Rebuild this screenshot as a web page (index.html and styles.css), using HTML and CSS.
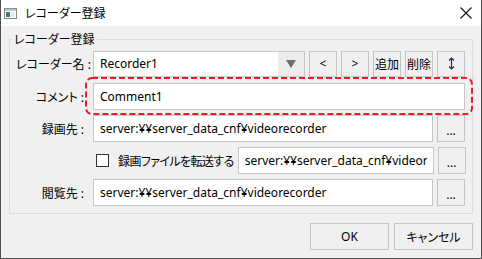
FILE: index.html
```html
<!DOCTYPE html>
<html lang="ja">
<head>
  <meta charset="UTF-8" />
  <title>レコーダー登録</title>
  <link rel="stylesheet" href="styles.css">
</head>
<body>
  <div class="window">
    <div class="titlebar">
      <svg class="app-icon" width="13" height="11" viewBox="0 0 13 11">
        <rect x="0.5" y="0.5" width="12" height="10" fill="#fff" stroke="#8a8a8a"/>
        <rect x="1" y="1" width="11" height="2" fill="#b9c6d3"/>
        <rect x="2" y="4" width="4" height="5" fill="#3f7f6f"/>
        <rect x="7" y="4" width="4" height="5" fill="#e4e9ee"/>
      </svg>
      <span class="title">レコーダー登録</span>
      <div class="close">
        <svg width="12" height="12" viewBox="0 0 12 12">
          <path d="M0.5 0.5 L11.5 11.5 M11.5 0.5 L0.5 11.5" stroke="#111" stroke-width="1.1"/>
        </svg>
      </div>
    </div>

    <div class="content">
      <fieldset class="group">
        <legend>レコーダー登録</legend>

        <div class="row">
          <label class="lbl">レコーダー名 :</label>
          <div class="combo">
            <span class="combo-text">Recorder1</span>
            <span class="combo-drop"><span class="arrow"></span></span>
          </div>
          <button class="sq">&lt;</button>
          <button class="sq">&gt;</button>
          <button class="sq">追加</button>
          <button class="sq">削除</button>
          <button class="sq">
            <svg width="7" height="13" viewBox="0 0 7 13">
              <path d="M3.5 1 V12 M1 3.5 L3.5 1 L6 3.5 M1 9.5 L3.5 12 L6 9.5" fill="none" stroke="#1f2d5a" stroke-width="1.2"/>
            </svg>
          </button>
        </div>

        <div class="row row-comment">
          <label class="lbl">コメント :</label>
          <div class="note">
            <input class="field" type="text" value="Comment1">
            <svg class="mark" width="388" height="38" viewBox="0 0 388 38">
              <rect x="1" y="1" width="386" height="36" rx="6" fill="none" stroke="#ee1c24" stroke-width="2" stroke-dasharray="6 3"/>
            </svg>
          </div>
        </div>

        <div class="row">
          <label class="lbl">録画先 :</label>
          <input class="field" type="text" value="server:¥¥server_data_cnf¥videorecorder">
          <button class="sq dots">...</button>
        </div>

        <div class="row">
          <span class="lbl"></span>
          <span class="check"></span>
          <span class="check-label">録画ファイルを転送する</span>
          <input class="field short" type="text" value="server:¥¥server_data_cnf¥videorecorder">
          <button class="sq dots">...</button>
        </div>

        <div class="row">
          <label class="lbl">閲覧先 :</label>
          <input class="field" type="text" value="server:¥¥server_data_cnf¥videorecorder">
          <button class="sq dots">...</button>
        </div>
      </fieldset>

      <div class="actions">
        <button class="btn">OK</button>
        <button class="btn">キャンセル</button>
      </div>
    </div>
  </div>
</body>
</html>
```

FILE: styles.css
```css
* {
  box-sizing: border-box;
}
body {
  margin: 0;
  font-family: "Noto Sans", "Noto Sans CJK JP", sans-serif;
  font-size: 12px;
  color: #000;
  font-feature-settings: "palt";
}
.window {
  width: 482px;
  height: 259px;
  background: #f0f0f0;
  border: 1px solid #4f4f4f;
  border-top: none;
  display: flex;
  flex-direction: column;
}
/* title bar */
.titlebar {
  height: 26px;
  background: #fff;
  display: flex;
  align-items: center;
  padding-left: 3px;
}
.app-icon {
  flex: none;
}
.title {
  margin-left: 8px;
  flex: 1;
}
.close {
  width: 30px;
  display: flex;
  justify-content: center;
}
/* group box */
.content {
  flex: 1;
  display: flex;
  flex-direction: column;
}
.group {
  margin: 4px 8px 0 8px;
  padding: 2px 7px 7px 6px;
  border: 1px solid #dcdcdc;
  min-inline-size: 0;
  display: flex;
  flex-direction: column;
  gap: 5px;
}
.group legend {
  padding: 0 2px;
  margin-left: -4px;
}
.row {
  display: flex;
  align-items: center;
  height: 27px;
  gap: 4px;
}
.row-comment {
  margin-top: 1px;
}
.lbl {
  width: 73px;
  flex: none;
  text-align: right;
  white-space: nowrap;
  padding-right: 5px;
}
.field {
  flex: 1;
  min-width: 0;
  height: 27px;
  border: 1px solid #c6c6c6;
  background: #fff;
  font: inherit;
  color: #000;
  padding: 0 6px;
  outline: none;
}
.field.short {
  flex: none;
  width: 196px;
  margin-left: auto;
}
/* combo box */
.combo {
  flex: 1;
  height: 26px;
  border: 1px solid #c6c6c6;
  background: #fff;
  display: flex;
  align-items: center;
}
.combo-text {
  flex: 1;
  padding-left: 6px;
}
.combo-drop {
  width: 26px;
  height: 100%;
  background: #ececec;
  display: flex;
  justify-content: center;
  align-items: center;
}
.arrow {
  width: 0;
  height: 0;
  border-left: 5px solid transparent;
  border-right: 5px solid transparent;
  border-top: 8px solid #6e6e6e;
}
/* buttons */
.sq {
  width: 28px;
  height: 26px;
  flex: none;
  padding: 0;
  border: 1px solid #c4c4c4;
  background: #f0f0f0;
  font: inherit;
  color: #000;
  display: flex;
  justify-content: center;
  align-items: center;
}
.dots {
  height: 27px;
  padding-top: 3px;
}
.note {
  flex: 1;
  position: relative;
  display: flex;
}
.mark {
  position: absolute;
  left: -8px;
  top: -6px;
  pointer-events: none;
}
/* checkbox row */
.check {
  width: 13px;
  height: 13px;
  margin-left: 3px;
  border: 1px solid #333;
  background: #fff;
  flex: none;
}
.check-label {
  margin-left: 5px;
  white-space: nowrap;
  letter-spacing: -0.6px;
}
/* dialog buttons */
.actions {
  display: flex;
  justify-content: flex-end;
  gap: 5px;
  padding: 9px 8px 0 0;
}
.btn {
  width: 79px;
  height: 27px;
  border: 1px solid #c4c4c4;
  background: #f0f0f0;
  font: inherit;
  color: #000;
}
```
